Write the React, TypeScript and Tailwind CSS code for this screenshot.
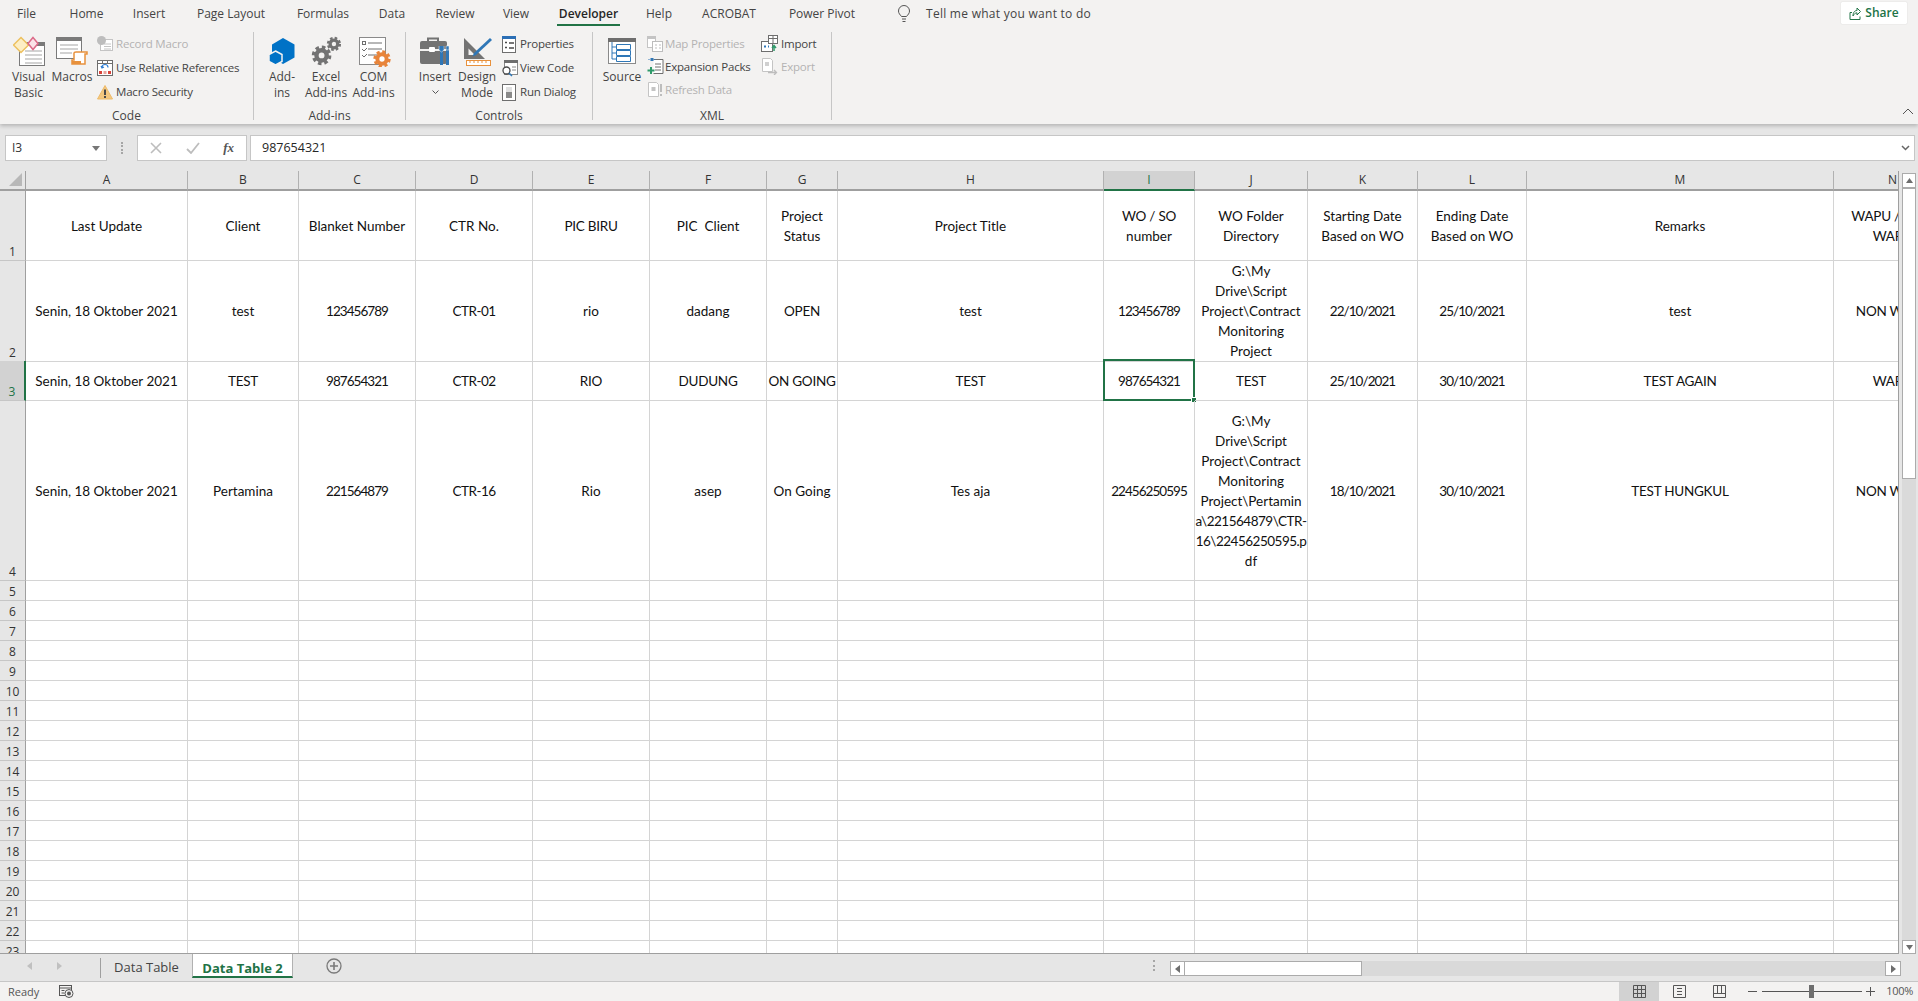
import type { ReactNode } from "react";

const rowTemplate =
  "grid grid-cols-[26px_162px_111px_117px_117px_117px_117px_71px_266px_91px_113px_110px_109px_307px_118px] w-[1952px]";

const columns = ["A", "B", "C", "D", "E", "F", "G", "H", "I", "J", "K", "L", "M", "N"];

const jShort = ["G:\\My", "Drive\\Script", "Project\\Contract", "Monitoring", "Project"];
const jLong = [
  "G:\\My",
  "Drive\\Script",
  "Project\\Contract",
  "Monitoring",
  "Project\\Pertamin",
  "a\\221564879\\CTR-",
  "16\\22456250595.p",
  "df",
];

type Cell = string | string[];

const rows: { n: number; h: string; cells: Cell[] }[] = [
  {
    n: 1,
    h: "h-[70px]",
    cells: [
      "Last Update",
      "Client",
      "Blanket Number",
      "CTR No.",
      "PIC BIRU",
      "PIC  Client",
      ["Project", "Status"],
      "Project Title",
      ["WO / SO", "number"],
      ["WO Folder", "Directory"],
      ["Starting Date", "Based on WO"],
      ["Ending Date", "Based on WO"],
      "Remarks",
      ["WAPU / NON", "WAPU"],
    ],
  },
  {
    n: 2,
    h: "h-[100px]",
    cells: [
      "Senin, 18 Oktober 2021",
      "test",
      "123456789",
      "CTR-01",
      "rio",
      "dadang",
      "OPEN",
      "test",
      "123456789",
      jShort,
      "22/10/2021",
      "25/10/2021",
      "test",
      "NON WAPU",
    ],
  },
  {
    n: 3,
    h: "h-[40px]",
    cells: [
      "Senin, 18 Oktober 2021",
      "TEST",
      "987654321",
      "CTR-02",
      "RIO",
      "DUDUNG",
      "ON GOING",
      "TEST",
      "987654321",
      "TEST",
      "25/10/2021",
      "30/10/2021",
      "TEST AGAIN",
      "WAPU",
    ],
  },
  {
    n: 4,
    h: "h-[180px]",
    cells: [
      "Senin, 18 Oktober 2021",
      "Pertamina",
      "221564879",
      "CTR-16",
      "Rio",
      "asep",
      "On Going",
      "Tes aja",
      "22456250595",
      jLong,
      "18/10/2021",
      "30/10/2021",
      "TEST HUNGKUL",
      "NON WAPU",
    ],
  },
];

const emptyRows = Array.from({ length: 19 }, (_, i) => i + 5);

// Lato digits and capitals run wider than the sheet's font
function cellTracking(line: string) {
  if (/^[\d/]+$/.test(line)) return "tracking-[-0.95px]";
  if (/\d/.test(line) && !line.startsWith("Senin")) return "tracking-[-0.5px]";
  if (line === line.toUpperCase()) return "tracking-[-0.25px]";
  return "";
}

/* ---------- ribbon icons ---------- */

function VisualBasicIcon() {
  return (
    <svg width="32" height="30" viewBox="0 0 32 30">
      <rect x="6.5" y="6.5" width="25" height="23" fill="#fff" stroke="#7a7a7a" />
      <rect x="6" y="6" width="26" height="4" fill="#7a7a7a" />
      <path d="M12 15h17M12 19h17M12 23h17M12 27h17" stroke="#a5a5a5" />
      <path d="M8 1.5l7.5 7.5L8 16.5.5 9z" fill="#fdeec4" stroke="#ecc05e" strokeWidth="1.5" />
      <path d="M20 1.5l5 6-5 6-5-6z" fill="#fbe3e8" stroke="#dc6a88" strokeWidth="1.5" />
    </svg>
  );
}

function MacrosIcon() {
  return (
    <svg width="32" height="30" viewBox="0 0 32 30">
      <rect x="0.5" y="1.5" width="25" height="21" fill="#fff" stroke="#7a7a7a" />
      <rect x="0" y="1" width="26" height="4" fill="#7a7a7a" />
      <path d="M4 9h18M4 13h18M4 17h12" stroke="#a5a5a5" />
      <path d="M20 16h11v2h-2v10H16v-4h2v-7q0-1 2-1z" fill="#fff" stroke="#e8913c" strokeWidth="1.5" />
      <path d="M16 25h9v3H16z" fill="#e8913c" />
    </svg>
  );
}

function RecordIcon() {
  return (
    <svg width="16" height="16" viewBox="0 0 16 16">
      <rect x="3.5" y="3.5" width="12" height="11" fill="#fff" stroke="#c4c4c4" />
      <path d="M7 8h7M7 10.500h7M7 13h7" stroke="#c4c4c4" />
      <circle cx="4.500" cy="4.500" r="4.500" fill="#bdbdbd" />
    </svg>
  );
}

function RelativeIcon() {
  return (
    <svg width="16" height="16" viewBox="0 0 16 16">
      <rect x="0.500" y="0.500" width="15" height="15" fill="#fff" stroke="#6e6e6e" />
      <path d="M0 3.500h16M5.500 0v4M10.500 0v4" stroke="#6e6e6e" />
      <path d="M5 7.500a3 3 0 0 1 6 0M4 6l1 2 2-1" fill="none" stroke="#2b7cd3" strokeWidth="1.200" />
      <rect x="2" y="11" width="3" height="3" fill="#d9443a" />
      <rect x="6.500" y="11" width="3" height="3" fill="#e9a39c" />
      <rect x="11" y="11" width="3" height="3" fill="#d9443a" />
    </svg>
  );
}

function SecurityIcon() {
  return (
    <svg width="16" height="16" viewBox="0 0 16 16">
      <path d="M8 1.500l7.500 13.500H.5z" fill="#f3c77f" stroke="#eebb6a" />
      <path d="M8 5.500v5.500" stroke="#4a4a4a" strokeWidth="2" />
      <rect x="7" y="12" width="2" height="2" fill="#4a4a4a" />
    </svg>
  );
}

function AddInsIcon() {
  return (
    <svg width="32" height="30" viewBox="0 0 30 30">
      <path d="M16 2l11.500 6.500v13L16 28 5 21.500v-13z" fill="#0072c6" />
      <path d="M8.500 15l6.500 3.500v7L8.500 29 2 25.500v-7z" fill="#0072c6" stroke="#f3f2f1" strokeWidth="1.500" />
    </svg>
  );
}

function Gear({ cx, cy, r, color }: { cx: number; cy: number; r: number; color: string }) {
  const outer = 2 * Math.PI * (r - 1);
  const dash = outer / 8;
  return (
    <g fill="none" stroke={color}>
      <circle cx={cx} cy={cy} r={r * 0.58} strokeWidth={r * 0.5} />
      <circle cx={cx} cy={cy} r={r - 1} strokeWidth={r * 0.42} strokeDasharray={`${dash * 0.55} ${dash * 0.45}`} />
    </g>
  );
}

function ExcelAddInsIcon() {
  return (
    <svg width="30" height="30" viewBox="0 0 34 32">
      <Gear cx={12} cy={21} r={10} color="#737373" />
      <Gear cx={26} cy={8} r={7.500} color="#737373" />
    </svg>
  );
}

function ComIcon() {
  return (
    <svg width="34" height="32" viewBox="0 0 34 32" className="ml-[2px]">
      <rect x="1.500" y="2.500" width="26" height="27" fill="#fff" stroke="#8a8a8a" />
      <rect x="4.500" y="6.500" width="3" height="3" fill="none" stroke="#6e6e6e" />
      <path d="M10 8h14M10 14h14M10 20h9" stroke="#6e6e6e" />
      <path d="M4 14l2 2 3-3M4 20l2 2 3-3" fill="none" stroke="#6e6e6e" />
      <Gear cx={24} cy={24} r={8} color="#e8843a" />
    </svg>
  );
}

function ToolboxIcon() {
  return (
    <svg width="32" height="30" viewBox="0 0 32 30">
      <path d="M9 5V2.500h10V5" fill="none" stroke="#737373" strokeWidth="2" />
      <path d="M1 7q0-2 2-2h23q2 0 2 2v6H1z" fill="#737373" />
      <path d="M1 15h27v11q0 2-2 2H3q-2 0-2-2z" fill="#737373" />
      <rect x="10" y="11" width="6" height="5" rx="1" fill="#fff" />
      <path d="M22.500 14v15M28.500 13v16" stroke="#2f77b7" strokeWidth="3" />
      <path d="M20 10v4l2.500 2 2.500-2v-4M27 10h3v4h-3z" fill="#2f77b7" stroke="#f3f2f1" strokeWidth="0.500" />
    </svg>
  );
}

function DesignIcon() {
  return (
    <svg width="32" height="30" viewBox="0 0 32 30">
      <path d="M3 2v21h21zM7.500 12.500v6.500h6.500z" fill="#737373" fillRule="evenodd" />
      <path d="M29 2l2 2-16 15-3.500 1.500L13 17z" fill="#2f77b7" />
      <rect x="5.500" y="24.500" width="24" height="5" fill="#fff" stroke="#e8913c" />
      <path d="M9 25v2M13 25v2M17 25v2M21 25v2M25 25v2" stroke="#e8913c" />
    </svg>
  );
}

function PropertiesIcon() {
  return (
    <svg width="16" height="17" viewBox="0 0 16 17">
      <rect x="1.500" y="0.500" width="13" height="16" fill="#fff" stroke="#6e6e6e" />
      <rect x="1" y="0" width="14" height="3" fill="#2b6fb5" />
      <path d="M4 6.500h2M4 11.500h2M8 7h5M8 12h5" stroke="#4a4a4a" strokeWidth="1.300" />
    </svg>
  );
}

function ViewCodeIcon() {
  return (
    <svg width="17" height="17" viewBox="0 0 17 17">
      <rect x="3.500" y="0.500" width="13" height="14" fill="#fff" stroke="#8a8a8a" />
      <rect x="3" y="0" width="14" height="3" fill="#6e6e6e" />
      <path d="M11 7h4M11 10h4" stroke="#8a8a8a" />
      <circle cx="5.500" cy="10.500" r="3.500" fill="#fff" stroke="#4a4a4a" strokeWidth="1.300" />
      <path d="M8 13l3 3" stroke="#2f77b7" strokeWidth="1.500" />
    </svg>
  );
}

function RunDialogIcon() {
  return (
    <svg width="16" height="17" viewBox="0 0 16 17">
      <rect x="1.500" y="0.500" width="13" height="16" fill="#fff" stroke="#6e6e6e" />
      <rect x="5" y="3" width="6" height="5" fill="#e0e0e0" />
      <rect x="5" y="8" width="6" height="6" fill="#8a8a8a" />
    </svg>
  );
}

function SourceIcon() {
  return (
    <svg width="30" height="28" viewBox="0 0 30 28">
      <rect x="1.500" y="1.500" width="27" height="25" fill="#fff" stroke="#8a8a8a" />
      <rect x="1" y="1" width="28" height="4" fill="#6e6e6e" />
      <path d="M5 5v17M5 10h4M5 16h4M5 22h4" stroke="#2f77b7" />
      <path d="M9.500 7.500h14v5h-14zM9.500 13.500h14v5h-14zM9.500 19.500h14v5h-14z" fill="#fff" stroke="#2f77b7" />
    </svg>
  );
}

function MapPropsIcon() {
  return (
    <svg width="16" height="16" viewBox="0 0 16 16">
      <rect x="0.500" y="0.500" width="8" height="11" fill="#fff" stroke="#c4c4c4" />
      <rect x="0" y="0" width="9" height="3" fill="#c4c4c4" />
      <rect x="5.500" y="5.500" width="10" height="10" fill="#fff" stroke="#bdbdbd" />
      <path d="M8 9h2M12 9h2M8 12h2M12 12h2" stroke="#bdbdbd" />
    </svg>
  );
}

function ExpansionIcon() {
  return (
    <svg width="18" height="17" viewBox="0 0 18 17">
      <path d="M6.500 1.500H16v14H6.500" fill="#fff" stroke="#6e6e6e" />
      <path d="M8 6h6M8 9h6M8 12h6" stroke="#6e6e6e" />
      <rect x="3.500" y="0" width="3" height="3" fill="#2f77b7" />
      <path d="M1.500 1.500h1M7.500 1.500h1" stroke="#2f77b7" />
      <path d="M4 9v7M0.500 12.500h7" stroke="#2f9a6a" strokeWidth="2" />
    </svg>
  );
}

function RefreshIcon() {
  return (
    <svg width="16" height="17" viewBox="0 0 16 17">
      <path d="M1.500 1.500h8l2 2v12h-10z" fill="#fff" stroke="#c4c4c4" />
      <rect x="4.500" y="6" width="4" height="4" fill="#c4c4c4" />
      <path d="M14 3v8M14 13v2" stroke="#bdbdbd" strokeWidth="2" />
    </svg>
  );
}

function ImportIcon() {
  return (
    <svg width="17" height="17" viewBox="0 0 17 17">
      <rect x="0.500" y="6.500" width="11" height="10" fill="#fff" stroke="#6e6e6e" />
      <rect x="7.500" y="0.500" width="9" height="8" fill="#fff" stroke="#6e6e6e" />
      <path d="M7.500 3.500h9M12 0v9" stroke="#6e6e6e" />
      <path d="M3 11.500h2M7 11.500h1" stroke="#2f77b7" strokeWidth="2" />
      <path d="M13 16v-5M11 13l2-2.500 2 2.500" fill="none" stroke="#2f9a6a" strokeWidth="1.500" />
    </svg>
  );
}

function ExportIcon() {
  return (
    <svg width="17" height="17" viewBox="0 0 17 17">
      <path d="M1.500 0.500h8l2 2v11h-10z" fill="#fff" stroke="#c4c4c4" />
      <rect x="4" y="4" width="4" height="4" fill="#d0d0d0" />
      <path d="M7 14.500h8M13 12l2.500 2.500L13 17" fill="none" stroke="#bdbdbd" strokeWidth="1.300" />
    </svg>
  );
}

/* ---------- ribbon parts ---------- */

function Big({ w, icon, lines, chevron }: { w: string; icon: ReactNode; lines: string[]; chevron?: boolean }) {
  return (
    <div className={`${w} flex flex-col items-center shrink-0`}>
      <div className="h-[37px] flex items-center justify-center">{icon}</div>
      {lines.map((l) => (
        <div key={l} className="leading-[16px] whitespace-nowrap text-[#444]">
          {l}
        </div>
      ))}
      {chevron && (
        <svg width="7" height="5" viewBox="0 0 7 5" className="mt-[5px]">
          <path d="M0.500 0.500L3.500 3.500 6.500 0.500" fill="none" stroke="#555" />
        </svg>
      )}
    </div>
  );
}

function Small({
  h,
  iconW,
  icon,
  label,
  off,
}: {
  h: string;
  iconW: string;
  icon: ReactNode;
  label: string;
  off?: boolean;
}) {
  return (
    <div
      className={`${h} flex items-center whitespace-nowrap text-[11.500px] tracking-[-0.2px] ${
        off ? "text-[#b3b3b3]" : "text-[#444]"
      }`}
    >
      <div className={`${iconW} shrink-0`}>{icon}</div>
      <span>{label}</span>
    </div>
  );
}

function Group({ w, label, pad, children }: { w: string; label: string; pad: string; children: ReactNode }) {
  return (
    <div className={`${w} h-[88px] shrink-0 flex flex-col border-r border-[#c6c6c6]`}>
      <div className={`flex flex-1 ${pad}`}>{children}</div>
      <div className="h-[12px] leading-[16px] text-center text-[#444]">{label}</div>
    </div>
  );
}

const tabs = [
  { t: "File", w: "w-[53px]" },
  { t: "Home", w: "w-[67px]" },
  { t: "Insert", w: "w-[58px]" },
  { t: "Page Layout", w: "w-[106px]" },
  { t: "Formulas", w: "w-[78px]" },
  { t: "Data", w: "w-[60px]" },
  { t: "Review", w: "w-[66px]" },
  { t: "View", w: "w-[56px]" },
  { t: "Developer", w: "w-[89px]" },
  { t: "Help", w: "w-[52px]" },
  { t: "ACROBAT", w: "w-[88px]" },
  { t: "Power Pivot", w: "w-[98px]" },
];

function Ribbon() {
  return (
    <div className="h-[124px] bg-[#f3f2f1] relative z-10 shadow-[0_2px_4px_rgba(0,0,0,0.22)] text-[12px] font-['Open_Sans',sans-serif]">
      <div className="h-[26px] flex items-start">
        {tabs.map((tab) =>
          tab.t === "Developer" ? (
            <div key={tab.t} className={`${tab.w} h-[26px] flex justify-center`}>
              <div className="h-[26px] leading-[27px] px-[2px] border-b-2 border-[#217346] text-[#262626] font-semibold">
                {tab.t}
              </div>
            </div>
          ) : (
            <div key={tab.t} className={`${tab.w} h-[26px] leading-[28px] text-center text-[#444]`}>
              {tab.t}
            </div>
          ),
        )}
        <svg width="14" height="18" viewBox="0 0 14 18" className="ml-[26px] mt-[5px]">
          <path
            d="M4.500 11.500C3 9.500 1.500 8.500 1.500 6a5.500 5.500 0 0 1 11 0c0 2.500-1.500 3.500-3 5.500z M5 14h4M5.500 16.500h3"
            fill="none"
            stroke="#555"
          />
        </svg>
        <div className="h-[26px] leading-[28px] ml-[15px] text-[#444] tracking-[0.27px]">
          Tell me what you want to do
        </div>
        <div className="ml-auto mr-[11px] mt-[2px] w-[66px] h-[22px] bg-white rounded-[1px] shadow-[0_0_1px_rgba(0,0,0,0.25)] flex items-center justify-center gap-[4px] text-[#217346]">
          <svg width="12" height="14" viewBox="0 0 12 14">
            <path d="M3 6.500H1v7h10v-3M4 10c0-4 2-5.500 4-5.500V2l3.500 3.500L8 9V6.800C6 7 5 8 4 10z" fill="none" stroke="#217346" />
          </svg>
          <span className="font-semibold">Share</span>
        </div>
      </div>
      <div className="mt-[6px] flex h-[88px]">
        <Group w="w-[254px]" label="Code" pad="pl-[5px]">
          <Big w="w-[47px]" icon={<VisualBasicIcon />} lines={["Visual", "Basic"]} />
          <Big w="w-[40px]" icon={<MacrosIcon />} lines={["Macros"]} />
          <div className="flex flex-col ml-[5px]">
            <Small h="h-[24px]" iconW="w-[19px]" icon={<RecordIcon />} label="Record Macro" off />
            <Small h="h-[24px]" iconW="w-[19px]" icon={<RelativeIcon />} label="Use Relative References" />
            <Small h="h-[24px]" iconW="w-[19px]" icon={<SecurityIcon />} label="Macro Security" />
          </div>
        </Group>
        <Group w="w-[152px]" label="Add-ins" pad="pl-[7px]">
          <Big w="w-[42px]" icon={<AddInsIcon />} lines={["Add-", "ins"]} />
          <Big w="w-[46px]" icon={<ExcelAddInsIcon />} lines={["Excel", "Add-ins"]} />
          <Big w="w-[49px]" icon={<ComIcon />} lines={["COM", "Add-ins"]} />
        </Group>
        <Group w="w-[187px]" label="Controls" pad="pl-[8px]">
          <Big w="w-[42px]" icon={<ToolboxIcon />} lines={["Insert"]} chevron />
          <Big w="w-[42px]" icon={<DesignIcon />} lines={["Design", "Mode"]} />
          <div className="flex flex-col ml-[3px]">
            <Small h="h-[24px]" iconW="w-[19px]" icon={<PropertiesIcon />} label="Properties" />
            <Small h="h-[24px]" iconW="w-[19px]" icon={<ViewCodeIcon />} label="View Code" />
            <Small h="h-[24px]" iconW="w-[19px]" icon={<RunDialogIcon />} label="Run Dialog" />
          </div>
        </Group>
        <Group w="w-[239px]" label="XML" pad="pl-[7px]">
          <Big w="w-[44px]" icon={<SourceIcon />} lines={["Source"]} />
          <div className="flex flex-col ml-[3px] w-[114px]">
            <Small h="h-[23px]" iconW="w-[18px]" icon={<MapPropsIcon />} label="Map Properties" off />
            <Small h="h-[23px]" iconW="w-[18px]" icon={<ExpansionIcon />} label="Expansion Packs" />
            <Small h="h-[23px]" iconW="w-[18px]" icon={<RefreshIcon />} label="Refresh Data" off />
          </div>
          <div className="flex flex-col">
            <Small h="h-[23px]" iconW="w-[20px]" icon={<ImportIcon />} label="Import" />
            <Small h="h-[23px]" iconW="w-[20px]" icon={<ExportIcon />} label="Export" off />
          </div>
        </Group>
      </div>
      <svg width="12" height="7" viewBox="0 0 12 7" className="absolute right-[4px] bottom-[9px]">
        <path d="M1 6l5-5 5 5" fill="none" stroke="#555" />
      </svg>
    </div>
  );
}

function FormulaBar() {
  return (
    <div className="h-[47px] bg-[#e6e6e6] pt-[11px] pl-[5px] pr-[3px] flex items-start font-['Open_Sans',sans-serif] text-[12px] text-[#333]">
      <div className="w-[102px] h-[26px] bg-white border border-[#c6c6c6] flex items-center justify-between pl-[6px] pr-[6px]">
        <span>I3</span>
        <svg width="8" height="5" viewBox="0 0 8 5">
          <path d="M0 0h8L4 5z" fill="#777" />
        </svg>
      </div>
      <div className="w-[30px] h-[26px] flex items-center justify-center">
        <div className="w-[2px] h-[12px] border-l-2 border-dotted border-[#a6a6a6]" />
      </div>
      <div className="w-[110px] h-[26px] bg-white border border-[#c6c6c6] flex items-center justify-between pl-[12px] pr-[12px]">
        <svg width="12" height="12" viewBox="0 0 12 12">
          <path d="M1 1l10 10M11 1L1 11" stroke="#bdbdbd" strokeWidth="1.600" />
        </svg>
        <svg width="14" height="12" viewBox="0 0 14 12" className="ml-[8px]">
          <path d="M1 7l4 4 8-10" fill="none" stroke="#bdbdbd" strokeWidth="1.800" />
        </svg>
        <span className="ml-[8px] font-['Liberation_Serif',serif] italic font-bold text-[13px] text-[#555]">fx</span>
      </div>
      <div className="ml-[3px] flex-1 h-[26px] bg-white border border-[#c6c6c6] flex items-center justify-between pl-[11px] pr-[4px]">
        <span className="text-[12.500px] text-[#262626]">987654321</span>
        <svg width="9" height="6" viewBox="0 0 9 6">
          <path d="M1 1l3.500 3.500L8 1" fill="none" stroke="#666" strokeWidth="1.500" />
        </svg>
      </div>
    </div>
  );
}

function CellView({ value, column, row }: { value: Cell; column: string; row: number }) {
  const selected = column === "I" && row === 3;
  const lines = Array.isArray(value) ? value : [value];
  return (
    <div className="relative border-r border-b border-[#d4d4d4] flex flex-col items-center justify-center leading-[20px] min-w-0">
      {lines.map((l, i) => (
        <div key={i} className={`whitespace-pre text-center ${cellTracking(l)}`}>
          {l}
        </div>
      ))}
      {selected && (
        <div className="absolute top-[-2px] left-[-1px] right-[-1px] bottom-[-1px] border-2 border-[#217346]">
          <div className="absolute right-[-4px] bottom-[-4px] w-[6px] h-[6px] bg-[#217346] border border-white" />
        </div>
      )}
    </div>
  );
}

function Sheet() {
  return (
    <div className="w-[1898px] h-[783px] overflow-hidden bg-white text-[13.500px] text-[#111] font-['Lato',sans-serif] border-b border-[#9f9f9f]">
      <div className={`${rowTemplate} h-[20px] font-['Open_Sans',sans-serif] text-[12px]`}>
        <div className="bg-[#e6e6e6] border-r border-b-2 border-[#9f9f9f] flex items-end justify-end pr-[3px] pb-[3px]">
          <div className="w-0 h-0 border-l-[13px] border-l-transparent border-b-[13px] border-b-[#b8b8b8]" />
        </div>
        {columns.map((c) => (
          <div
            key={c}
            className={
              c === "I"
                ? "bg-[#d2d2d2] border-r border-[#b1b1b1] border-b-2 border-b-[#217346] text-center leading-[18px] text-[#217346]"
                : "bg-[#e6e6e6] border-r border-[#b1b1b1] border-b-2 border-b-[#9f9f9f] text-center leading-[18px] text-[#333]"
            }
          >
            {c}
          </div>
        ))}
      </div>
      {rows.map((r) => (
        <div key={r.n} className={`${rowTemplate} ${r.h}`}>
          <div
            className={
              r.n === 3
                ? "bg-[#d2d2d2] border-r-2 border-[#217346] border-b border-b-[#c6c6c6] flex items-end justify-center leading-[17px] font-['Open_Sans',sans-serif] text-[12px] text-[#217346]"
                : "bg-[#e6e6e6] border-r border-[#9f9f9f] border-b border-b-[#c6c6c6] flex items-end justify-center leading-[17px] font-['Open_Sans',sans-serif] text-[12px] text-[#333]"
            }
          >
            {r.n}
          </div>
          {r.cells.map((cell, i) => (
            <CellView key={i} value={cell} column={columns[i]} row={r.n} />
          ))}
        </div>
      ))}
      {emptyRows.map((n) => (
        <div key={n} className={`${rowTemplate} h-[20px]`}>
          <div className="bg-[#e6e6e6] border-r border-[#9f9f9f] border-b border-b-[#c6c6c6] flex items-end justify-center leading-[17px] font-['Open_Sans',sans-serif] text-[12px] text-[#333]">
            {n}
          </div>
          {columns.map((c) => (
            <div key={c} className="border-r border-b border-[#d4d4d4]" />
          ))}
        </div>
      ))}
    </div>
  );
}

function VerticalScroll() {
  return (
    <div className="w-[20px] h-[783px] bg-[#e6e6e6] border-l border-[#9f9f9f] pl-[3px] pr-[2px] pt-[2px] flex flex-col">
      <div className="h-[15px] shrink-0 bg-white border border-[#ababab] flex items-center justify-center">
        <svg width="7" height="5" viewBox="0 0 7 5">
          <path d="M3.500 0L7 5H0z" fill="#6e6e6e" />
        </svg>
      </div>
      <div className="h-[291px] shrink-0 bg-white border border-[#ababab]" />
      <div className="flex-1 bg-[#dadada]" />
      <div className="h-[14px] shrink-0 bg-white border border-[#ababab] flex items-center justify-center">
        <svg width="7" height="5" viewBox="0 0 7 5">
          <path d="M0 0h7L3.500 5z" fill="#6e6e6e" />
        </svg>
      </div>
    </div>
  );
}

function TabBar() {
  return (
    <div className="h-[28px] bg-[#e6e6e6] border-b border-[#c6c6c6] flex items-start font-['Open_Sans',sans-serif] text-[13px]">
      <div className="w-[100px] h-[24px] flex items-center pl-[27px] gap-[25px]">
        <svg width="5" height="8" viewBox="0 0 5 8">
          <path d="M5 0v8L0 4z" fill="#c0c0c0" />
        </svg>
        <svg width="5" height="8" viewBox="0 0 5 8">
          <path d="M0 0v8l5-4z" fill="#c0c0c0" />
        </svg>
      </div>
      <div className="w-[92px] h-[20px] mt-[4px] border-l border-[#9f9f9f] leading-[19px] text-center text-[#444]">
        Data Table
      </div>
      <div className="w-[101px] h-[24px] bg-white border-b-2 border-[#217346] border-x border-x-[#b1b1b1] leading-[28px] text-center font-bold text-[#217346]">
        Data Table 2
      </div>
      <div className="ml-[33px] h-[24px] flex items-center">
        <svg width="16" height="16" viewBox="0 0 16 16">
          <circle cx="8" cy="8" r="7" fill="none" stroke="#7a7a7a" strokeWidth="1.300" />
          <path d="M8 4v8M4 8h8" stroke="#7a7a7a" strokeWidth="1.600" />
        </svg>
      </div>
      <div className="ml-[811px] h-[24px] flex items-center">
        <div className="w-[2px] h-[11px] mt-[-1px] border-l-2 border-dotted border-[#a6a6a6]" />
      </div>
      <div className="ml-[15px] mt-[7px] w-[731px] h-[15px] flex bg-[#d9d9d9]">
        <div className="w-[15px] bg-white border border-[#ababab] flex items-center justify-center">
          <svg width="5" height="8" viewBox="0 0 5 8">
            <path d="M5 0v8L0 4z" fill="#6e6e6e" />
          </svg>
        </div>
        <div className="w-[177px] bg-white border border-[#ababab] border-l-0" />
        <div className="flex-1" />
        <div className="w-[16px] bg-white border border-[#ababab] flex items-center justify-center">
          <svg width="5" height="8" viewBox="0 0 5 8">
            <path d="M0 0v8l5-4z" fill="#6e6e6e" />
          </svg>
        </div>
      </div>
    </div>
  );
}

function StatusBar() {
  return (
    <div className="h-[19px] bg-[#f3f2f1] flex items-center font-['Open_Sans',sans-serif] text-[11px] text-[#555]">
      <span className="ml-[8px] pt-px">Ready</span>
      <svg width="15" height="13" viewBox="0 0 15 13" className="ml-[20px]">
        <rect x="0.500" y="0.500" width="12" height="10" fill="none" stroke="#555" />
        <path d="M0 3h13M2.500 5.500h3M2.500 8h3" stroke="#555" />
        <circle cx="10" cy="8.500" r="4" fill="#f3f2f1" stroke="#555" />
        <circle cx="10" cy="8.500" r="2" fill="#555" />
      </svg>
      <div className="ml-[1545px] w-[40px] h-[19px] bg-[#d2d2d2] flex items-center justify-center">
        <svg width="13" height="13" viewBox="0 0 13 13">
          <path d="M.5.500h12v12H.500zM4.500 0v13M8.500 0v13M0 4.500h13M0 8.500h13" fill="none" stroke="#555" />
        </svg>
      </div>
      <div className="w-[40px] flex justify-center">
        <svg width="13" height="13" viewBox="0 0 13 13">
          <path d="M.5.500h12v12H.500zM4 3.500h5M4 6.500h5M4 9.500h5" fill="none" stroke="#555" />
        </svg>
      </div>
      <div className="w-[40px] flex justify-center">
        <svg width="13" height="13" viewBox="0 0 13 13">
          <path d="M.5.500h12v12H.500zM4.500 0v8.500h4V0M0 8.500h13" fill="none" stroke="#555" />
        </svg>
      </div>
      <div className="w-[9px] h-px bg-[#555] ml-[9px]" />
      <div className="relative w-[100px] h-px bg-[#555] ml-[5px]">
        <div className="absolute left-[47px] top-[-6px] w-[5px] h-[13px] bg-[#6e6e6e]" />
      </div>
      <svg width="9" height="9" viewBox="0 0 9 9" className="ml-[4px]">
        <path d="M4.500 0v9M0 4.500h9" stroke="#555" />
      </svg>
      <span className="ml-[11px] tracking-[-0.3px]">100%</span>
    </div>
  );
}

export default function App() {
  return (
    <div className="w-[1918px] h-[1001px] overflow-hidden flex flex-col bg-[#e6e6e6]">
      <Ribbon />
      <FormulaBar />
      <div className="flex">
        <Sheet />
        <VerticalScroll />
      </div>
      <TabBar />
      <StatusBar />
    </div>
  );
}
